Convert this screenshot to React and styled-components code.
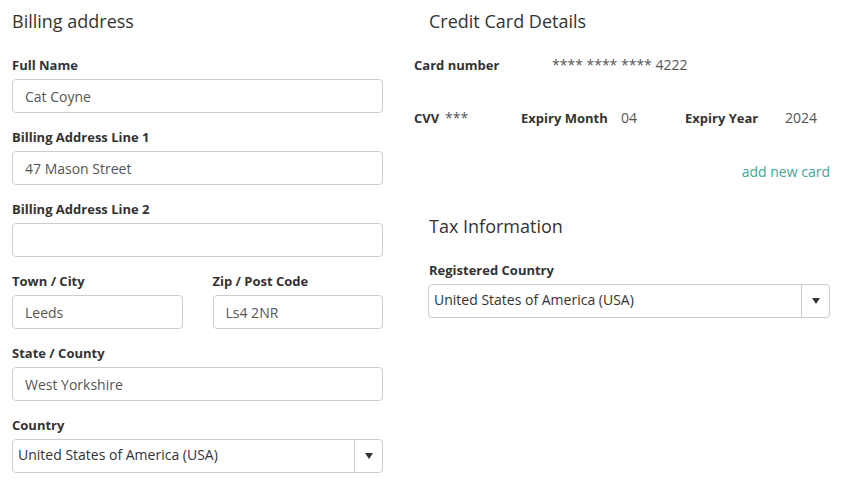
import styled, { createGlobalStyle } from 'styled-components';

const GlobalStyle = createGlobalStyle`
	body {
		margin: 0;
		background: #fff;
		font-family: "Open Sans", "Liberation Sans", sans-serif;
		color: #333;
	}
`;

const App = () => {
	return (
		<Page>
			<GlobalStyle />
			<LeftColumn>
				<Heading>Billing address</Heading>
				<Field>
					<Label>Full Name</Label>
					<Input defaultValue="Cat Coyne" />
				</Field>
				<Field>
					<Label>Billing Address Line 1</Label>
					<Input defaultValue="47 Mason Street" />
				</Field>
				<Field>
					<Label>Billing Address Line 2</Label>
					<Input defaultValue="" />
				</Field>
				<FieldPair>
					<Field>
						<Label>Town / City</Label>
						<Input defaultValue="Leeds" />
					</Field>
					<Field>
						<Label>Zip / Post Code</Label>
						<Input defaultValue="Ls4 2NR" />
					</Field>
				</FieldPair>
				<Field>
					<Label>State / County</Label>
					<Input defaultValue="West Yorkshire" />
				</Field>
				<Field>
					<Label>Country</Label>
					<SelectBox>
						<SelectText>United States of America (USA)</SelectText>
						<ArrowCell>
							<Arrow />
						</ArrowCell>
					</SelectBox>
				</Field>
			</LeftColumn>

			<RightColumn>
				<Heading indent={15}>Credit Card Details</Heading>
				<InfoRow top={0}>
					<InfoLabel width={138}>Card number</InfoLabel>
					<InfoValue>**** **** **** 4222</InfoValue>
				</InfoRow>
				<InfoRow top={35}>
					<InfoGroup width={107}>
						<InfoLabel width={31}>CVV</InfoLabel>
						<InfoValue>***</InfoValue>
					</InfoGroup>
					<InfoGroup width={164}>
						<InfoLabel width={100}>Expiry Month</InfoLabel>
						<InfoValue>04</InfoValue>
					</InfoGroup>
					<InfoGroup>
						<InfoLabel width={100}>Expiry Year</InfoLabel>
						<InfoValue>2024</InfoValue>
					</InfoGroup>
				</InfoRow>
				<LinkRow>
					<AddLink href="#">add new card</AddLink>
				</LinkRow>
				<TaxSection>
					<Heading indent={1}>Tax Information</Heading>
					<Field>
						<Label indent={1}>Registered Country</Label>
						<SelectBox>
							<SelectText>United States of America (USA)</SelectText>
							<ArrowCell>
								<Arrow />
							</ArrowCell>
						</SelectBox>
					</Field>
				</TaxSection>
			</RightColumn>
		</Page>
	);
};

let Page = styled.div`
	display: flex;
	gap: 31px;
	padding: 0 12px;
	width: 818px;
`;

let LeftColumn = styled.div`
	width: 371px;
	display: flex;
	flex-direction: column;
`;

let RightColumn = styled.div`
	width: 416px;
	display: flex;
	flex-direction: column;
`;

let Heading = styled.h2`
	margin: 9px 0 23px;
	padding-left: ${(p) => p.indent || 0}px;
	font-size: 18px;
	line-height: 24px;
	font-weight: 400;
	color: #333;
`;

let Field = styled.div`
	display: flex;
	flex-direction: column;
	gap: 5px;
	margin-bottom: 15px;
	flex: 1;
`;

let FieldPair = styled.div`
	display: flex;
	gap: 30px;
`;

let Label = styled.label`
	padding-left: ${(p) => p.indent || 0}px;
	font-size: 13px;
	line-height: 18px;
	font-weight: 700;
	color: #333;
`;

let Input = styled.input`
	box-sizing: border-box;
	width: 100%;
	height: 34px;
	padding: 0 12px;
	border: 1px solid #ccc;
	border-radius: 4px;
	font-family: "Open Sans", "Liberation Sans", sans-serif;
	font-size: 14px;
	color: #555;
	background: #fff;
	outline: none;
`;

let SelectBox = styled.div`
	box-sizing: border-box;
	display: flex;
	align-items: stretch;
	height: 34px;
	border: 1px solid #ccc;
	border-radius: 4px;
	background: #fff;
`;

let SelectText = styled.span`
	flex: 1;
	display: flex;
	align-items: center;
	padding: 0 0 3px 5px;
	font-size: 14px;
	color: #333;
`;

let ArrowCell = styled.span`
	width: 27px;
	border-left: 1px solid #ccc;
	display: flex;
	align-items: center;
	justify-content: center;
`;

let Arrow = styled.span`
	width: 0;
	height: 0;
	border-left: 4px solid transparent;
	border-right: 4px solid transparent;
	border-top: 6px solid #333;
	margin-left: 1px;
`;

let InfoRow = styled.div`
	display: flex;
	align-items: baseline;
	margin-top: ${(p) => p.top}px;
	line-height: 18px;
`;

let InfoGroup = styled.div`
	display: flex;
	align-items: baseline;
	width: ${(p) => (p.width ? `${p.width}px` : 'auto')};
`;

let InfoLabel = styled.span`
	width: ${(p) => p.width}px;
	font-size: 13px;
	font-weight: 700;
	color: #333;
`;

let InfoValue = styled.span`
	font-size: 14px;
	color: #555;
`;

let LinkRow = styled.div`
	display: flex;
	justify-content: flex-end;
	margin-top: 36px;
	line-height: 18px;
`;

let AddLink = styled.a`
	font-size: 14px;
	color: #3ea69b;
	text-decoration: none;
`;

let TaxSection = styled.div`
	margin-top: 24px;
	margin-left: 14px;
	display: flex;
	flex-direction: column;
`;

export default App;
